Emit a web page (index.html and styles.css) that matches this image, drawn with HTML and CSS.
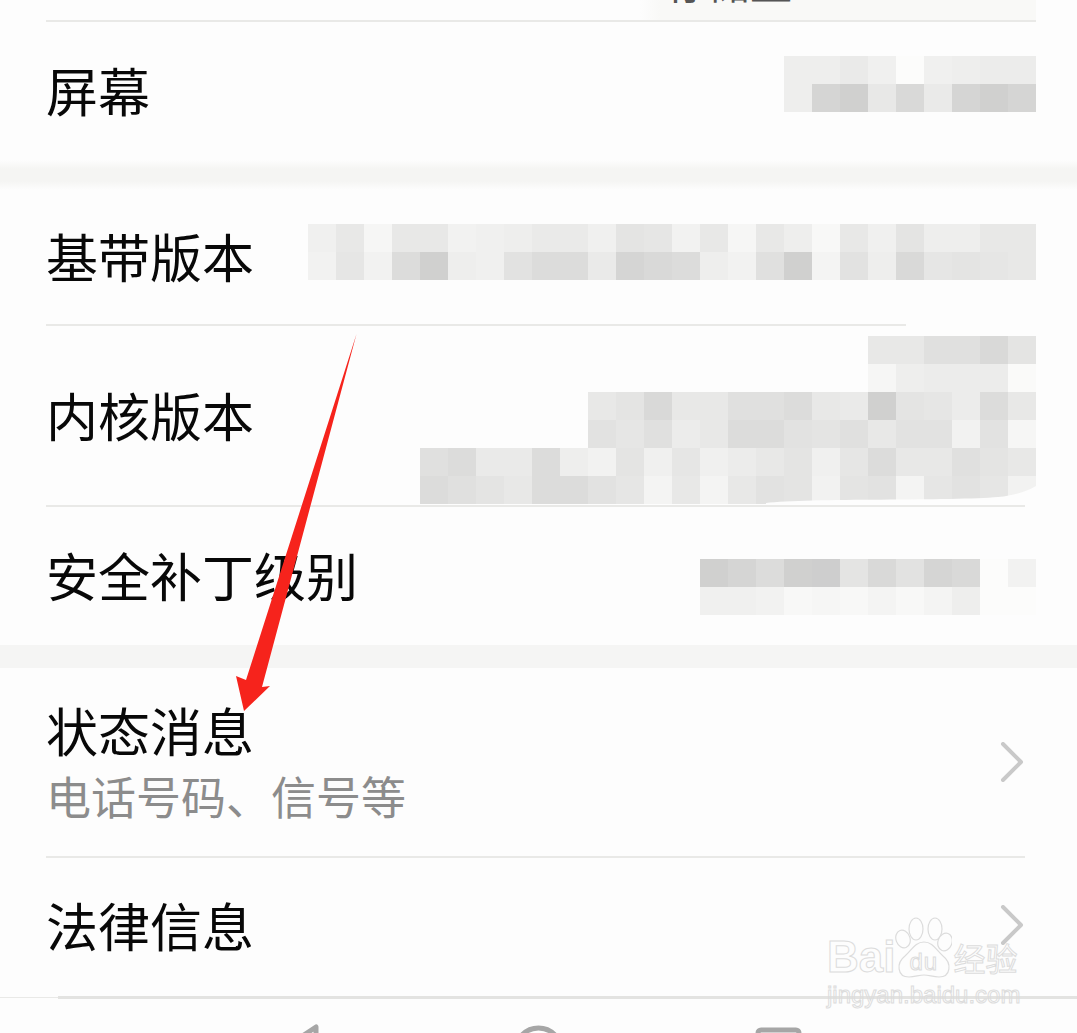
FILE: index.html
```html
<!DOCTYPE html>
<html lang="zh-CN">
<head>
<meta charset="utf-8">
<title>关于手机</title>
<link rel="stylesheet" href="styles.css">
</head>
<body>
<main class="page">
  <div class="stub"><span class="stub-text">存储量</span></div>

  <section class="group group-first">
    <div class="row row-screen">
      <span class="label">屏幕</span>
      <div class="mosaic mosaic-screen">
        <div class="mrow"><i class="gee"></i><i class="gee"></i><i class="gea"></i><i class="gf0"></i><i class="gfc"></i><i class="gf0"></i><i class="gee"></i><i class="gec"></i><i class="gec"></i></div>
        <div class="mrow"><i class="gee"></i><i class="gd4"></i><i class="gd0"></i><i class="ge8"></i><i class="gd8"></i><i class="gea"></i><i class="gd4"></i><i class="gd0"></i><i class="gd4"></i></div>
      </div>
    </div>
  </section>

  <div class="band band-a"></div>

  <section class="group">
    <div class="row row-base line-short">
      <span class="label">基带版本</span>
      <div class="mosaic mosaic-base">
        <div class="mrow"><i class="gf0"></i><i class="ge8"></i><i class="gf6"></i><i class="ge8"></i><i class="ge8"></i><i class="gf2"></i><i class="gf0"></i><i class="gee"></i><i class="gea"></i><i class="gea"></i><i class="gf0"></i><i class="ge4"></i><i class="ge6"></i><i class="gf2"></i><i class="ge8"></i><i class="gf6"></i><i class="ge8"></i><i class="gee"></i><i class="gf8"></i><i class="ge8"></i><i class="gf0"></i><i class="ge4"></i><i class="gee"></i><i class="gee"></i><i class="ge8"></i><i class="ge8"></i></div>
        <div class="mrow"><i class="gf2"></i><i class="ge6"></i><i class="gf2"></i><i class="gdc"></i><i class="gd0"></i><i class="gee"></i><i class="gf0"></i><i class="ge2"></i><i class="gdc"></i><i class="gdc"></i><i class="gea"></i><i class="gd4"></i><i class="gd8"></i><i class="gdc"></i><i class="gee"></i><i class="gf2"></i><i class="ge0"></i><i class="gd0"></i><i class="gf4"></i><i class="ge2"></i><i class="gee"></i><i class="gd8"></i><i class="ge6"></i><i class="ge4"></i><i class="ge6"></i><i class="ge8"></i></div>
      </div>
    </div>
    <div class="row row-kernel">
      <span class="label label-kernel">内核版本</span>
      <div class="mosaic mosaic-kernel">
        <div class="mrow"><i class="ge8"></i><i class="ge8"></i><i class="ge0"></i><i class="ge0"></i><i class="gd8"></i><i class="ge4"></i></div>
        <div class="mrow"><i class="gf6"></i><i class="gee"></i><i class="gec"></i><i class="gec"></i><i class="gec"></i><i class="gfa"></i></div>
        <div class="mrow"><i class="ge8"></i><i class="ge4"></i><i class="gd8"></i><i class="ge8"></i><i class="ge8"></i><i class="ge0"></i><i class="ge0"></i><i class="gdc"></i><i class="ge8"></i><i class="gea"></i><i class="gd0"></i><i class="ge4"></i><i class="ge6"></i><i class="gec"></i><i class="gdc"></i><i class="ge8"></i></div>
        <div class="mrow"><i class="ge2"></i><i class="ge6"></i><i class="ge0"></i><i class="gec"></i><i class="ge8"></i><i class="gdc"></i><i class="gdc"></i><i class="ge2"></i><i class="ge4"></i><i class="ge0"></i><i class="ge8"></i><i class="ge2"></i><i class="ge2"></i><i class="gf2"></i><i class="ge2"></i><i class="gf6"></i></div>
        <div class="mrow"><i class="ge0"></i><i class="gdc"></i><i class="gea"></i><i class="gea"></i><i class="gdc"></i><i class="gee"></i><i class="gf2"></i><i class="ge4"></i><i class="gf0"></i><i class="ge6"></i><i class="gf0"></i><i class="gec"></i><i class="ge8"></i><i class="ge4"></i><i class="gf0"></i><i class="ge6"></i><i class="gdc"></i><i class="ge8"></i><i class="ge8"></i><i class="ge0"></i><i class="ge4"></i><i class="ge8"></i></div>
        <div class="mrow"><i class="gdc"></i><i class="ge0"></i><i class="ge4"></i><i class="ge8"></i><i class="gdc"></i><i class="gdc"></i><i class="ge2"></i><i class="ge6"></i><i class="gf4"></i><i class="ge8"></i><i class="gf4"></i><i class="ge8"></i><i class="ge2"></i><i class="ge4"></i><i class="gf2"></i><i class="ge4"></i><i class="ge2"></i><i class="gf4"></i><i class="ge6"></i><i class="ge2"></i><i class="ge6"></i><i class="gf2"></i></div>
      </div>
      <svg class="smear" viewBox="0 0 270 18" aria-hidden="true"><path d="M0 17C40 12 190 15 232 11 250 9 262 5 270 0V18H0Z"/></svg>
    </div>
    <div class="row row-security line">
      <span class="label">安全补丁级别</span>
      <div class="mosaic mosaic-security">
        <div class="mrow"><i class="gd0"></i><i class="gd4"></i><i class="gdc"></i><i class="gd0"></i><i class="gce"></i><i class="ge4"></i><i class="gd8"></i><i class="ge2"></i><i class="gd4"></i><i class="gd8"></i><i class="gfc"></i><i class="gf2"></i></div>
        <div class="mrow"><i class="gf0"></i><i class="gf0"></i><i class="gf2"></i><i class="gf8"></i><i class="gf6"></i><i class="gf8"></i><i class="gf4"></i><i class="gf8"></i><i class="gf4"></i><i class="gee"></i><i class="gfc"></i><i class="gfc"></i></div>
      </div>
    </div>
  </section>

  <div class="band band-b"></div>

  <section class="group">
    <div class="row row-status">
      <div class="stack">
        <span class="label">状态消息</span>
        <span class="sub">电话号码、信号等</span>
      </div>
      <svg class="chev" viewBox="0 0 24 40" aria-hidden="true"><path d="M3 2 21 20 3 38"/></svg>
    </div>
    <div class="row row-legal line">
      <span class="label">法律信息</span>
      <svg class="chev" viewBox="0 0 24 40" aria-hidden="true"><path d="M3 2 21 20 3 38"/></svg>
    </div>
  </section>

  <nav class="nav">
    <svg class="nav-icons" viewBox="0 0 1077 37" aria-hidden="true">
      <path d="M280 55 316 31V90"/>
      <circle cx="538.500" cy="55" r="23"/>
      <rect x="758" y="34" width="41" height="50" rx="3"/>
    </svg>
  </nav>

  <svg class="arrow" viewBox="0 0 1077 1033" aria-hidden="true"><path d="M356.500 334 262 687 270 686 244 711 236 676 246 680Z"/></svg>

  <div class="watermark">
    <div class="wm-top">
      <span class="wm-bai">Bai</span>
      <span class="wm-paw">
        <svg viewBox="0 0 57 62" aria-hidden="true">
          <ellipse cx="8" cy="22" rx="7" ry="9" transform="rotate(-20 8 22)"/>
          <ellipse cx="21" cy="12" rx="7" ry="11"/>
          <ellipse cx="40" cy="12" rx="7" ry="11"/>
          <ellipse cx="50" cy="25" rx="7" ry="9" transform="rotate(20 50 25)"/>
          <path d="M29 25C38 25 41 33 48 39 57 46 56 60 44 60 38 60 34 58 29 58 24 58 20 60 14 60 2 60 1 46 10 39 17 33 20 25 29 25Z"/>
        </svg>
        <span class="wm-du">du</span>
      </span>
      <span class="wm-cn">经验</span>
    </div>
    <div class="wm-url">jingyan.baidu.com</div>
  </div>
</main>
</body>
</html>
```
FILE: styles.css
```css
* { box-sizing: border-box; }
html, body { margin: 0; padding: 0; }
body {
  background: #fdfdfd;
  font-family: "Noto Sans CJK SC", "Liberation Sans", sans-serif;
  color: #080808;
}
.page {
  position: relative;
  width: 1077px;
  height: 1033px;
  overflow: hidden;
  display: flex;
  flex-direction: column;
  background: #fdfdfd;
}
.stub {
  flex: none;
  height: 22px;
  margin: 0 41px 0 46px;
  padding-right: 244px;
  border-bottom: 2px solid #e9e9e7;
  background: linear-gradient(to right, transparent 60%, #f9f9f7 62%);
  display: flex;
  justify-content: flex-end;
  align-items: flex-end;
  overflow: hidden;
}
.stub-text {
  font-size: 42px;
  line-height: 42px;
  color: #555;
  margin-bottom: 18px;
  white-space: nowrap;
}
.band { flex: none; }
.band-a { height: 30px; background: linear-gradient(#fdfdfd, #f5f5f3 30%, #f5f5f3 70%, #fdfdfd); }
.band-b { height: 23px; background: #f5f5f4; }
.group { display: flex; flex-direction: column; flex: none; }
.row {
  position: relative;
  display: flex;
  align-items: center;
  justify-content: space-between;
  padding: 0 41px 0 46px;
}
.row-screen { height: 138px; padding-bottom: 2px; }
.row-base { height: 136px; padding-bottom: 4px; }
.row-kernel { height: 179px; padding-bottom: 2px; }
.row-security { height: 140px; }
.row-status { height: 188px; padding-right: 53px; }
.row-legal { height: 140px; padding-right: 53px; padding-bottom: 3px; }
.line::before, .line-short::after {
  content: "";
  position: absolute;
  left: 46px;
  height: 2px;
  background: #e9e9e7;
}
.line::before { top: 0; right: 52px; }
.line-short::after { bottom: 0; width: 860px; }
.label {
  font-size: 52px;
  line-height: 62px;
  white-space: nowrap;
}
.stack { display: flex; flex-direction: column; gap: 10px; margin-bottom: 4px; }
.sub {
  font-size: 45px;
  line-height: 50px;
  color: #8c8c8c;
  white-space: nowrap;
}
.mosaic { display: flex; flex-direction: column; align-self: flex-start; }
.mosaic-screen { margin-top: 34px; }
.mosaic-base { margin-top: 34px; }
.mosaic-kernel { margin-top: 10px; }
.mosaic-security { margin-top: 54px; }
.mrow { display: flex; justify-content: flex-end; }
.mrow i { display: block; width: 28px; height: 28px; }
.smear {
  position: absolute;
  right: 41px;
  bottom: 1px;
  width: 270px;
  height: 18px;
}
.smear path { fill: #fdfdfd; }
.chev {
  flex: none;
  width: 24px;
  height: 40px;
}
.chev path { fill: none; stroke: #c9c9c9; stroke-width: 4; stroke-linecap: round; stroke-linejoin: round; }
.nav {
  position: relative;
  flex: none;
  height: 37px;
}
.nav::before {
  content: "";
  position: absolute;
  left: 58px;
  right: 0;
  top: 0;
  height: 3px;
  background: #e3e3e1;
}
.nav::after {
  content: "";
  position: absolute;
  left: 0;
  width: 58px;
  top: 1px;
  height: 1px;
  background: #e9e9e7;
}
.nav-icons { display: block; width: 1077px; height: 37px; }
.nav-icons path, .nav-icons circle, .nav-icons rect { fill: none; stroke: #a6a6a6; stroke-width: 5; stroke-linejoin: round; }
.arrow {
  position: absolute;
  left: 0;
  top: 0;
  width: 1077px;
  height: 1033px;
  pointer-events: none;
}
.arrow path { fill: #f6231c; }
.watermark {
  position: absolute;
  left: 827px;
  top: 916px;
  width: 192px;
  color: transparent;
}
.wm-top { display: flex; align-items: flex-end; height: 63px; }
.wm-bai, .wm-du, .wm-cn, .wm-url {
  font-family: "Liberation Sans", "Noto Sans CJK SC", sans-serif;
  -webkit-text-stroke: 1px #dcdcdc;
  white-space: nowrap;
}
.wm-bai { font-size: 44px; line-height: 44px; font-weight: 700; }
.wm-paw { position: relative; display: block; flex: none; width: 57px; height: 62px; }
.wm-paw svg { width: 57px; height: 62px; display: block; fill: #fdfdfd; stroke: #dcdcdc; stroke-width: 1.200; }
.wm-du { position: absolute; left: 14px; top: 33px; font-size: 24px; line-height: 24px; letter-spacing: 1px; }
.wm-cn { font-family: "Noto Sans CJK SC", sans-serif; flex: none; font-size: 32px; line-height: 38px; margin-left: 1px; margin-bottom: 3px; }
.wm-url { font-size: 24px; line-height: 26px; margin-top: 3px; }
.gce { background: #cecece; }
.gd0 { background: #d0d0cf; }
.gd4 { background: #d5d5d4; }
.gd8 { background: #d9d9d8; }
.gdc { background: #dcdcdb; }
.ge0 { background: #e0e0df; }
.ge2 { background: #e2e2e1; }
.ge4 { background: #e4e4e3; }
.ge6 { background: #e6e6e5; }
.ge8 { background: #e8e8e7; }
.gea { background: #eaeae9; }
.gec { background: #ececeb; }
.gee { background: #eeeeed; }
.gf0 { background: #f0f0ef; }
.gf2 { background: #f2f2f1; }
.gf4 { background: #f4f4f3; }
.gf6 { background: #f6f6f5; }
.gf8 { background: #f8f8f7; }
.gfa { background: #fafaf9; }
.gfc { background: #fcfcfb; }
```
